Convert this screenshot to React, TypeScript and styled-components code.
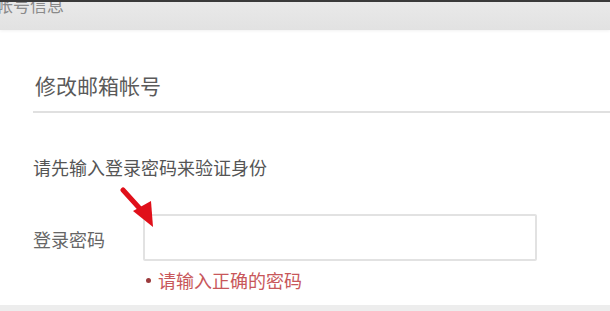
import React from "react";
import styled, { createGlobalStyle } from "styled-components";

const Global = createGlobalStyle`
  html, body { margin: 0; padding: 0; background: #fff; }
  body { font-family: "Noto Sans CJK SC", "Noto Sans", sans-serif; }
`;

const Page = styled.div`
  width: 610px;
  height: 311px;
  overflow: hidden;
  display: flex;
  flex-direction: column;
  background: #fff;
`;

const TopBar = styled.div`
  height: 28px;
  flex: none;
  border-top: 2px solid #3a3a3a;
  background: linear-gradient(#e9e9e9, #e2e2e2);
  overflow: hidden;
  box-shadow: 0 1px 3px rgba(0, 0, 0, 0.06);
`;

const TopTitle = styled.div`
  margin-top: -7px;
  margin-left: -4px;
  font-size: 17px;
  line-height: 20px;
  color: #8a8a8a;
`;

const Body = styled.div`
  flex: 1;
  display: flex;
  flex-direction: column;
  padding: 40px 0 0 33px;
`;

const Heading = styled.h2`
  margin: 0 0 0 2px;
  font-size: 21px;
  line-height: 30px;
  font-weight: 400;
  color: #5a5a5a;
`;

const Divider = styled.div`
  margin-top: 11px;
  height: 2px;
  background: #e0e0e0;
`;

const Hint = styled.p`
  margin: 42px 0 0;
  font-size: 18px;
  line-height: 24px;
  color: #555;
`;

const FormRow = styled.div`
  position: relative;
  margin-top: 35px;
  display: flex;
  align-items: center;
`;

const Label = styled.label`
  width: 110px;
  font-size: 18px;
  line-height: 24px;
  color: #666;
  padding-top: 3px;
`;

const Input = styled.input`
  width: 394px;
  height: 47px;
  box-sizing: border-box;
  border: 2px solid #e2e2e2;
  border-radius: 2px;
  background: #fff;
  outline: none;
`;

const Arrow = styled.svg`
  position: absolute;
  left: 87px;
  top: -27px;
`;

const ErrorLine = styled.div`
  margin: 7px 0 0 113px;
  display: flex;
  align-items: center;
  gap: 7px;
  font-size: 18px;
  line-height: 24px;
  color: #c8575a;
`;

const Dot = styled.span`
  width: 5px;
  height: 5px;
  border-radius: 50%;
  background: #9b3a3c;
`;

const BottomBar = styled.div`
  height: 6px;
  flex: none;
  background: #ededed;
`;

export default function App() {
  return (
    <Page>
      <Global />
      <TopBar>
        <TopTitle>帐号信息</TopTitle>
      </TopBar>
      <Body>
        <Heading>修改邮箱帐号</Heading>
        <Divider />
        <Hint>请先输入登录密码来验证身份</Hint>
        <FormRow>
          <Label>登录密码</Label>
          <Input type="password" />
          <Arrow width="40" height="45" viewBox="0 0 40 45">
            <line x1="3" y1="3" x2="22" y2="24" stroke="#e0101a" strokeWidth="5" strokeLinecap="round" />
            <polygon points="13,24 31,14 33,40" fill="#e0101a" />
          </Arrow>
        </FormRow>
        <ErrorLine>
          <Dot />
          请输入正确的密码
        </ErrorLine>
      </Body>
      <BottomBar />
    </Page>
  );
}
